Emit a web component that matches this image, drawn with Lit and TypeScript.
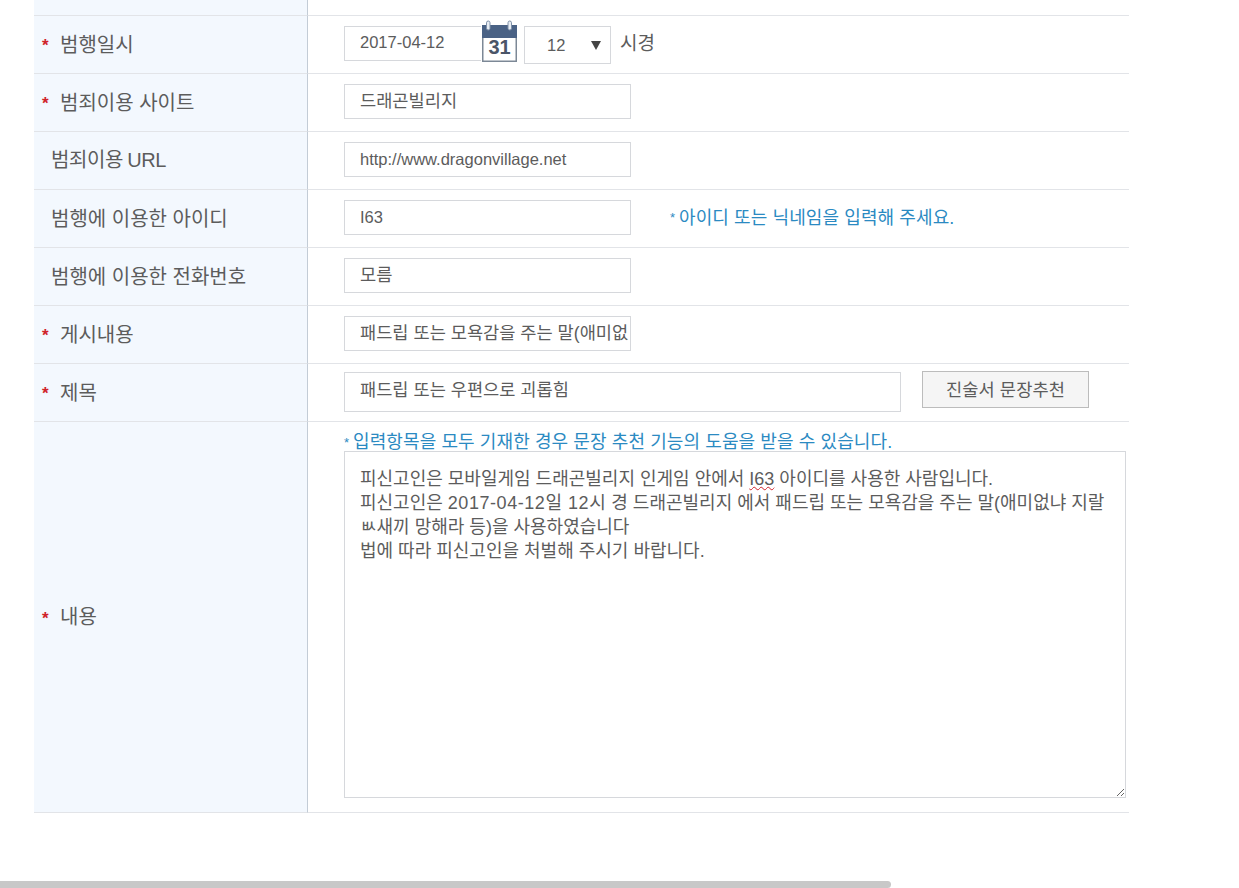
import { LitElement, html, css } from "lit";
import { customElement } from "lit/decorators.js";

type Row = { label: string; req: boolean; value: string; hint?: string; tight?: boolean };

const rows: Row[] = [
  { label: "범죄이용 사이트", req: true, value: "드래곤빌리지" },
  { label: "범죄이용 URL", req: false, value: "http://www.dragonvillage.net", tight: true },
  { label: "범행에 이용한 아이디", req: false, value: "I63", hint: "아이디 또는 닉네임을 입력해 주세요." },
  { label: "범행에 이용한 전화번호", req: false, value: "모름" },
  { label: "게시내용", req: true, value: "패드립 또는 모욕감을 주는 말(애미없" },
];

@customElement("app-root")
export class AppRoot extends LitElement {
  static styles = css`
    :host {
      display: flex;
      flex-direction: column;
      height: 888px;
      overflow: hidden;
      background: #fff;
      color: #5c5c5c;
      font-family: "Liberation Sans", "Noto Sans CJK KR", sans-serif;
    }
    .table {
      width: 1095px;
      margin-left: 34px;
      display: grid;
      grid-template-columns: 274px 1fr;
    }
    .th {
      background: #f3f8fe;
      border-right: 1px solid #c3ccd6;
      border-bottom: 1px solid #e2e4e8;
      display: flex;
      align-items: center;
      padding: 0 0 3px 17px;
      font-size: 20px;
      box-sizing: border-box;
      height: 58px;
    }
    .th.req { padding-left: 8px; }
    .tight { word-spacing: -1px; letter-spacing: -0.4px; padding-bottom: 5px; }
    .star {
      color: #d0222a;
      font-size: 17px;
      font-weight: 700;
      width: 18px;
      flex: none;
      position: relative;
      top: 3px;
    }
    .td {
      border-bottom: 1px solid #e2e4e8;
      display: flex;
      align-items: center;
      padding: 0 0 2px 36px;
      box-sizing: border-box;
      height: 58px;
      min-width: 0;
    }
    .top { height: 16px; padding: 0; }
    .tall { height: 391px; }
    .input {
      border: 1px solid #d6d8dc;
      box-sizing: border-box;
      height: 35px;
      width: 287px;
      padding-left: 15px;
      font-size: 17.6px;
      line-height: 32px;
      white-space: nowrap;
      overflow: hidden;
      flex: none;
    }
    .latin { font-size: 16.5px; }
    .date { width: 137px; border-right: none; line-height: 31px; }
    .cal { flex: none; display: block; margin-top: -4px; }
    .select {
      flex: none;
      box-sizing: border-box;
      width: 87px;
      height: 38px;
      margin-left: 6px;
      margin-top: 3px;
      border: 1px solid #d6d8dc;
      display: flex;
      align-items: center;
      justify-content: space-between;
      padding: 0 9px 0 22px;
      font-size: 16.5px;
    }
    .arrow {
      width: 0;
      height: 0;
      border-left: 5px solid transparent;
      border-right: 5px solid transparent;
      border-top: 9px solid #444;
    }
    .unit { margin-left: 9px; font-size: 19px; position: relative; top: -2px; }
    .hint { color: #2b8ac2; font-size: 18px; letter-spacing: 0.1px; white-space: nowrap; display: flex; align-items: center; }
    .mark { width: 9px; flex: none; font-size: 13px; position: relative; top: 1px; }
    .side { margin-left: 39px; margin-bottom: 3px; }
    .title { width: 557px; height: 40px; line-height: 35px; }
    .btn {
      flex: none;
      box-sizing: border-box;
      width: 167px;
      height: 37px;
      margin-left: 21px;
      margin-top: -5px;
      padding-bottom: 2px;
      background: #f5f5f5;
      border: 1px solid #bcbcbc;
      display: flex;
      align-items: center;
      justify-content: center;
      font-size: 17.6px;
      letter-spacing: 0.1px;
    }
    .stack {
      flex-direction: column;
      align-items: flex-start;
      justify-content: flex-start;
      padding: 11px 0 0 36px;
    }
    .stack .hint { line-height: 18px; height: 18px; }
    .area {
      box-sizing: border-box;
      width: 782px;
      height: 347px;
      border: 1px solid #d6d8dc;
      padding: 15px 15px 13px;
      font-size: 18px;
      line-height: 24px;
      overflow: auto;
      resize: both;
      flex: none;
    }
    .line { white-space: nowrap; }
    .wide { letter-spacing: 0.55px; }
    .typo { text-decoration: underline wavy #d0222a 1px; }
    .spacer { flex: 1; }
    .scroll {
      flex: none;
      width: 891px;
      height: 7px;
      background: #c8c8c8;
      border-radius: 0 4px 4px 0;
    }
  `;

  private label(text: string, req: boolean, extra = "") {
    return html`<div class="th ${req ? "req" : ""} ${extra}">
      ${req ? html`<span class="star">*</span>` : ""}<span>${text}</span>
    </div>`;
  }

  private calendar() {
    return html`<svg class="cal" width="37" height="43" viewBox="0 0 37 43">
      <rect x="1.75" y="6.75" width="33.5" height="34.5" fill="#fff" stroke="#7c8896" stroke-width="1.5"></rect>
      <rect x="1" y="5" width="35" height="13" fill="#4a6285"></rect>
      <rect x="5.5" y="1" width="3.5" height="9" rx="1.75" fill="#e8edf3" stroke="#7e90a8"></rect>
      <rect x="27" y="1" width="3.5" height="9" rx="1.75" fill="#e8edf3" stroke="#7e90a8"></rect>
      <text x="18.5" y="34" text-anchor="middle" font-family="Liberation Sans" font-weight="700" font-size="20" fill="#4a5568">31</text>
    </svg>`;
  }

  render() {
    return html`
      <div class="table">
        <div class="th top"></div>
        <div class="td top"></div>

        ${this.label("범행일시", true)}
        <div class="td">
          <div class="input date latin">2017-04-12</div>
          ${this.calendar()}
          <div class="select"><span>12</span><span class="arrow"></span></div>
          <span class="unit">시경</span>
        </div>

        ${rows.map(
          (r) => html`${this.label(r.label, r.req, r.tight ? "tight" : "")}
            <div class="td">
              <div class="input ${/^[\x00-\x7f]+$/.test(r.value) ? "latin" : ""}">${r.value}</div>
              ${r.hint ? html`<span class="hint side"><span class="mark">*</span><span>${r.hint}</span></span>` : ""}
            </div>`
        )}

        ${this.label("제목", true)}
        <div class="td">
          <div class="input title">패드립 또는 우편으로 괴롭힘</div>
          <div class="btn">진술서 문장추천</div>
        </div>

        ${this.label("내용", true, "tall")}
        <div class="td tall stack">
          <span class="hint"><span class="mark">*</span><span>입력항목을 모두 기재한 경우 문장 추천 기능의 도움을 받을 수 있습니다.</span></span>
          <div class="area">
            <div class="line">피신고인은 모바일게임 드래곤빌리지 인게임 안에서 <span class="typo">I63</span> 아이디를 사용한 사람입니다.</div>
            <div class="line">피신고인은 <span class="wide">2017-04-12일 12시</span> 경 드래곤빌리지 에서 패드립 또는 모욕감을 주는 말(애미없냐 지랄</div>
            <div class="line">ㅄ새끼 망해라 등)을 사용하였습니다</div>
            <div class="line">법에 따라 피신고인을 처벌해 주시기 바랍니다.</div>
          </div>
        </div>
      </div>
      <div class="spacer"></div>
      <div class="scroll"></div>
    `;
  }
}
